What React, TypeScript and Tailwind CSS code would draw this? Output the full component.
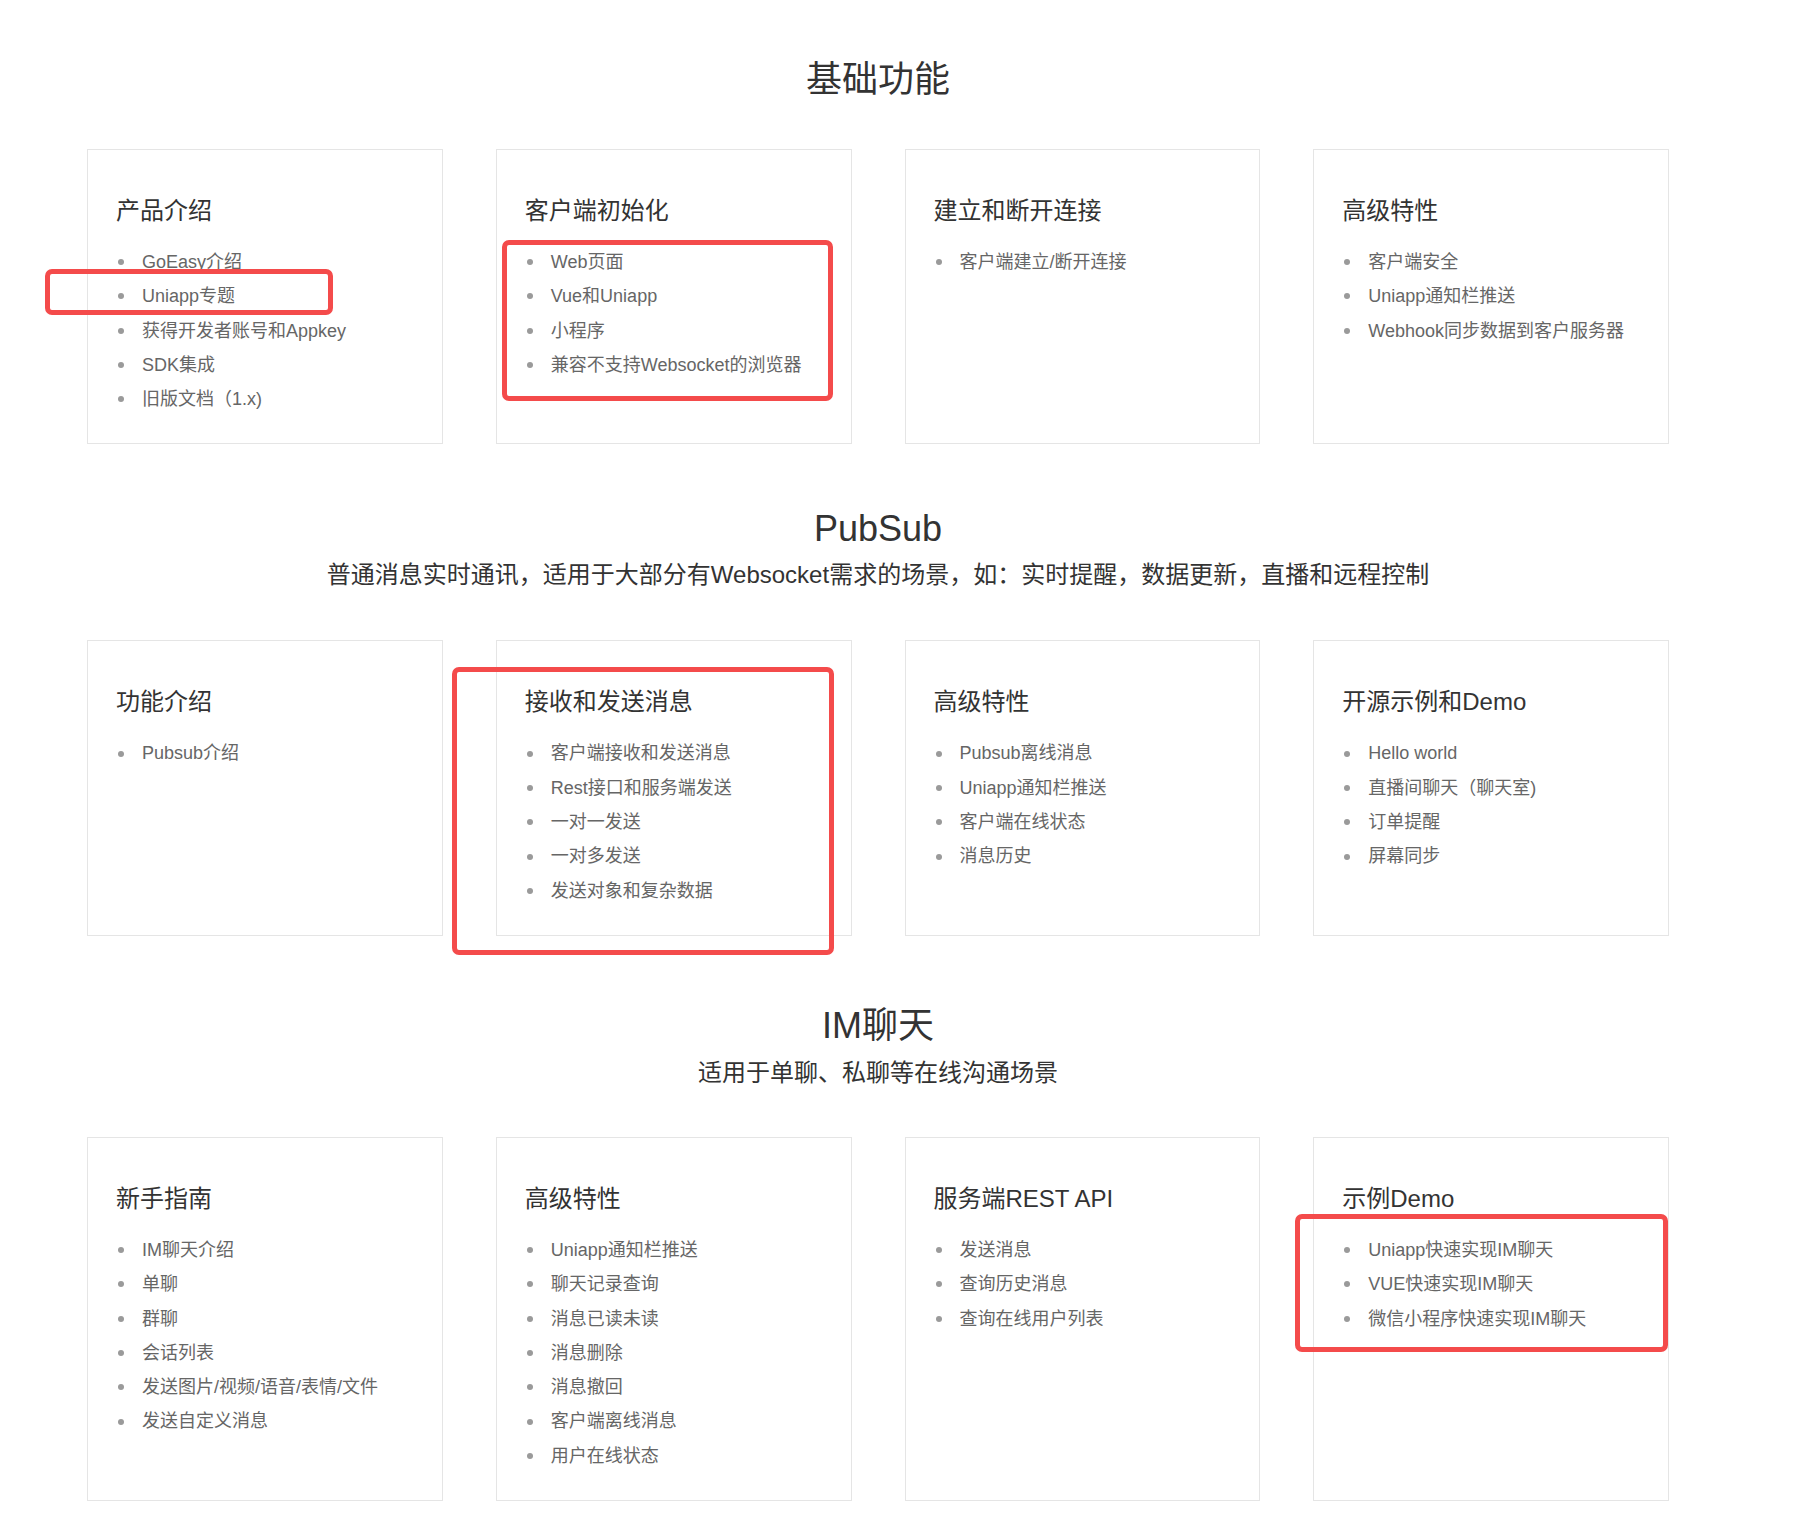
import React from "react";

type Card = { title: string; items: string[] };

const sec1: Card[] = [
  { title: "产品介绍", items: ["GoEasy介绍", "Uniapp专题", "获得开发者账号和Appkey", "SDK集成", "旧版文档（1.x)"] },
  { title: "客户端初始化", items: ["Web页面", "Vue和Uniapp", "小程序", "兼容不支持Websocket的浏览器"] },
  { title: "建立和断开连接", items: ["客户端建立/断开连接"] },
  { title: "高级特性", items: ["客户端安全", "Uniapp通知栏推送", "Webhook同步数据到客户服务器"] },
];

const sec2: Card[] = [
  { title: "功能介绍", items: ["Pubsub介绍"] },
  { title: "接收和发送消息", items: ["客户端接收和发送消息", "Rest接口和服务端发送", "一对一发送", "一对多发送", "发送对象和复杂数据"] },
  { title: "高级特性", items: ["Pubsub离线消息", "Uniapp通知栏推送", "客户端在线状态", "消息历史"] },
  { title: "开源示例和Demo", items: ["Hello world", "直播间聊天（聊天室)", "订单提醒", "屏幕同步"] },
];

const sec3: Card[] = [
  { title: "新手指南", items: ["IM聊天介绍", "单聊", "群聊", "会话列表", "发送图片/视频/语音/表情/文件", "发送自定义消息"] },
  { title: "高级特性", items: ["Uniapp通知栏推送", "聊天记录查询", "消息已读未读", "消息删除", "消息撤回", "客户端离线消息", "用户在线状态"] },
  { title: "服务端REST API", items: ["发送消息", "查询历史消息", "查询在线用户列表"] },
  { title: "示例Demo", items: ["Uniapp快速实现IM聊天", "VUE快速实现IM聊天", "微信小程序快速实现IM聊天"] },
];

function CardGrid({ cards }: { cards: Card[] }) {
  return (
    <div className="grid grid-cols-4 gap-[53px]">
      {cards.map((c, i) => (
        <div key={i} className="border border-[#e5e5e5] bg-white pl-[28px] pr-[10px] pt-[43px] pb-[27px]">
          <div className="text-[24px] leading-[36px] text-[#333333] whitespace-nowrap">{c.title}</div>
          <ul className="mt-[16px]">
            {c.items.map((it, j) => (
              <li key={j} className="flex items-center h-[34.3px] text-[18px] leading-[34.3px] text-[#666666] whitespace-nowrap">
                <span className="ml-[2px] mr-[18px] w-[6px] h-[6px] rounded-full bg-[#9a9a9a] shrink-0" />
                <span>{it}</span>
              </li>
            ))}
          </ul>
        </div>
      ))}
    </div>
  );
}

export default function App() {
  return (
    <div className="relative w-[1802px] min-h-[1539px] bg-white font-['Liberation_Sans','Noto_Sans_CJK_SC',sans-serif]">
      <div className="ml-[87px] w-[1582px] pt-[56px]">
        <h2 className="text-center text-[36px] leading-[48px] text-[#333333]">基础功能</h2>
        <div className="mt-[45px]">
          <CardGrid cards={sec1} />
        </div>

        <h2 className="mt-[61px] text-center text-[36px] leading-[48px] text-[#333333]">PubSub</h2>
        <p className="mt-[4px] text-center text-[24px] leading-[36px] text-[#333333]">
          普通消息实时通讯，适用于大部分有Websocket需求的场景，如：实时提醒，数据更新，直播和远程控制
        </p>
        <div className="mt-[47px]">
          <CardGrid cards={sec2} />
        </div>

        <h2 className="mt-[66px] text-center text-[36px] leading-[48px] text-[#333333]">IM聊天</h2>
        <p className="mt-[5px] text-center text-[24px] leading-[36px] text-[#333333]">适用于单聊、私聊等在线沟通场景</p>
        <div className="mt-[46px]">
          <CardGrid cards={sec3} />
        </div>
      </div>

      <div className="absolute left-[45px] top-[269px] w-[288px] h-[46px] border-[5px] border-[#f44b4b] rounded-[7px]" />
      <div className="absolute left-[502px] top-[240px] w-[331px] h-[161px] border-[5px] border-[#f44b4b] rounded-[7px]" />
      <div className="absolute left-[452px] top-[667px] w-[382px] h-[288px] border-[5px] border-[#f44b4b] rounded-[7px]" />
      <div className="absolute left-[1295px] top-[1214px] w-[373px] h-[138px] border-[5px] border-[#f44b4b] rounded-[7px]" />
    </div>
  );
}
